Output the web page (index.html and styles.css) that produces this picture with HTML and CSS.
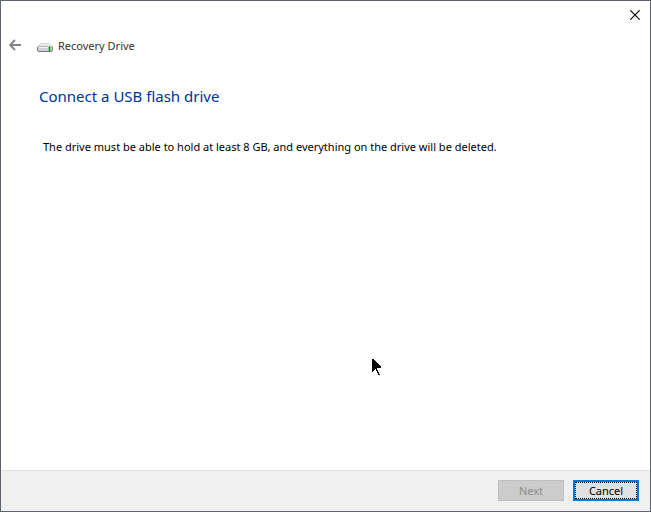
FILE: index.html
```html
<!DOCTYPE html>
<html lang="en">
<head>
    <meta charset="UTF-8">
    <meta name="viewport" content="width=device-width, initial-scale=1.0">
    <title>Recovery Drive</title>
    <link rel="stylesheet" href="styles.css">
</head>
<body>

    <div class="window">
        <!-- Title bar -->
        <div class="titlebar">
            <button class="close-btn" type="button" aria-label="Close">
                <svg width="10" height="10" viewBox="0 0 10 10">
                    <path d="M0.3 0.3 L9.7 9.7 M9.7 0.3 L0.3 9.7" fill="none" stroke="#000" stroke-width="1.1"/>
                </svg>
            </button>
        </div>

        <!-- Back arrow, drive icon and wizard name -->
        <header class="wizard-header">
            <button class="back-btn" type="button" aria-label="Back">
                <svg width="12" height="12" viewBox="0 0 12 12">
                    <path d="M12 6 H1.2 M6 1 L1 6 L6 11" fill="none" stroke="#838383" stroke-width="1.9"/>
                </svg>
            </button>
            <svg class="drive-icon" width="16" height="16" viewBox="0 0 16 16">
                <path d="M3.5 4.5 H12.5 L15.5 8 H0.5 Z" fill="#ececec" stroke="#cfcfcf" stroke-width="0.8"/>
                <rect x="0.5" y="7.5" width="15" height="5" rx="1.6" fill="#d2d0d6" stroke="#77747c"/>
                <path d="M1 7.5 H15" stroke="#b4b2b8"/>
                <path d="M1.5 8.5 H11" stroke="#f4f4f6"/>
                <rect x="11" y="8" width="3" height="4" fill="#8fd08a"/>
                <rect x="12" y="8" width="1" height="4" fill="#1f8a1c"/>
            </svg>
            <span class="wizard-name">Recovery Drive</span>
        </header>

        <!-- Page content -->
        <main class="content">
            <h1>Connect a USB flash drive</h1>
            <p>The drive must be able to hold at least 8 GB, and everything on the drive will be deleted.</p>
        </main>

        <!-- Buttons -->
        <footer class="footer">
            <button class="btn" type="button" disabled>Next</button>
            <button class="btn btn-default" type="button">Cancel</button>
        </footer>
    </div>

    <!-- Mouse pointer -->
    <svg class="pointer" width="9" height="17" viewBox="0 0 9 17" shape-rendering="crispEdges">
        <path d="M0 0 H1 L9 8 V9 H5 V11 H6 V13 H7 V15 H8 V16 H6 V14 H5 V12 H4 V10 H3 L0 13 Z" fill="#000"/>
    </svg>

</body>
</html>
```
FILE: styles.css
```css
* {
    box-sizing: border-box;
}
body {
    margin: 0;
    font-family: "Segoe UI", "Noto Sans", "Open Sans", sans-serif;
    font-size: 11px;
    line-height: 16px;
    color: #000;
}
button {
    font: inherit;
}

.window {
    display: flex;
    flex-direction: column;
    min-height: 100vh;
    background: #fff;
    border: 1px solid #5b646c;
}

/* Title bar */
.titlebar {
    display: flex;
    justify-content: flex-end;
    height: 28px;
}
.close-btn,
.back-btn {
    display: flex;
    align-items: center;
    justify-content: center;
    padding: 0;
    border: none;
    background: none;
}
.close-btn {
    width: 30px;
}

/* Header */
.wizard-header {
    display: flex;
    align-items: center;
    height: 32px;
    padding-left: 8px;
}
.back-btn {
    width: 12px;
    height: 16px;
}
.drive-icon {
    margin: 4px 5px 0 16px;
}
.wizard-name {
    padding-top: 2px;
    color: #333;
}

/* Content */
.content {
    flex: 1;
    padding: 24px 38px;
}
h1 {
    margin: 0;
    font-size: 15px;
    font-weight: normal;
    line-height: 22px;
    color: #003399;
}
p {
    margin: 32px 4px 0;
}

/* Footer */
.footer {
    display: flex;
    justify-content: flex-end;
    gap: 9px;
    padding: 9px 11px 10px;
    background: #f0f0f0;
    border-top: 1px solid #dfdfdf;
}
.btn {
    width: 66px;
    height: 21px;
    padding: 0;
    line-height: 16px;
    color: #000;
    background: #e1e1e1;
    border: 1px solid #adadad;
}
.btn:disabled {
    color: #8b8b8b;
    background: #ccc;
    border-color: #bfbfbf;
}
.btn-default {
    border: 2px solid #0078d7;
    outline: 1px dotted #000;
    outline-offset: -3px;
}

.pointer {
    position: absolute;
    top: 359px;
    left: 372px;
}
```
